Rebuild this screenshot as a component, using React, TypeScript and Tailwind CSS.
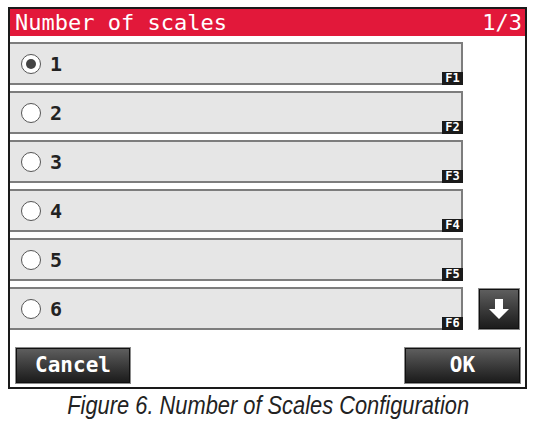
import React from "react";

const mono = { fontFamily: '"DejaVu Sans Mono", "Liberation Mono", monospace' };

function Radio({ checked }: { checked: boolean }) {
  return (
    <div className="w-[20px] h-[20px] rounded-full border-[1.5px] border-[#555] bg-white flex items-center justify-center">
      {checked && <div className="w-[10px] h-[10px] rounded-full bg-[#444]" />}
    </div>
  );
}

function Row({ n, checked }: { n: number; checked: boolean }) {
  return (
    <div className="relative h-[43px] bg-[#e6e6e6] border-y-2 border-r-2 border-[#7d7d7d] flex items-center pl-[11px]">
      <Radio checked={checked} />
      <span className="ml-[9px] text-[20px] font-bold text-[#222] leading-none" style={mono}>
        {n}
      </span>
      <div
        className="absolute right-[-2px] bottom-[-2px] w-[21px] h-[13px] bg-[#1a1a1a] text-white text-[12px] font-bold leading-[13px] flex items-center justify-center"
        style={mono}
      >
        F{n}
      </div>
    </div>
  );
}

function DarkButton({ children, className }: { children: React.ReactNode; className: string }) {
  return (
    <div className={`bg-[#8a8a8a] p-[1px] ${className}`}>
      <div className="w-full h-full border border-[#111] bg-gradient-to-b from-[#5e5e5e] to-[#1c1c1c] flex items-center justify-center">
        {children}
      </div>
    </div>
  );
}

export default function App() {
  return (
    <div className="w-[537px] h-[425px] bg-white overflow-hidden pt-[7px]">
      <div className="ml-[8px] w-[519px] h-[382px] border-2 border-[#1a1a1a] flex flex-col">
        <div className="h-[27px] bg-[#e2183a] flex items-center justify-between pl-[5px] pr-[3px] text-white text-[22px] leading-none" style={mono}>
          <span>Number of scales</span>
          <span>1/3</span>
        </div>
        <div className="mt-[6px] flex">
          <div className="w-[453px] flex flex-col gap-[6px]">
            {[1, 2, 3, 4, 5, 6].map((n) => (
              <Row key={n} n={n} checked={n === 1} />
            ))}
          </div>
          <div className="flex-1 flex items-end justify-end pr-[5px]">
            <DarkButton className="w-[42px] h-[42px]">
              <svg width="24" height="24" viewBox="0 0 24 24">
                <path d="M8 2 H16 V12 H22 L12 22 L2 12 H8 Z" fill="white" />
              </svg>
            </DarkButton>
          </div>
        </div>
        <div className="mt-[17px] flex justify-between pl-[5px] pr-[4px]">
          <DarkButton className="w-[116px] h-[37px]">
            <span className="text-white text-[21px] font-bold leading-none" style={mono}>Cancel</span>
          </DarkButton>
          <DarkButton className="w-[117px] h-[37px]">
            <span className="text-white text-[21px] font-bold leading-none" style={mono}>OK</span>
          </DarkButton>
        </div>
      </div>
      <div className="mt-[1px] flex justify-center">
        <div
          className="text-[26px] italic text-[#222] leading-[30px] scale-x-[0.84] whitespace-nowrap"
          style={{ fontFamily: '"Liberation Sans", Arial, sans-serif' }}
        >
          Figure 6. Number of Scales Configuration
        </div>
      </div>
    </div>
  );
}
